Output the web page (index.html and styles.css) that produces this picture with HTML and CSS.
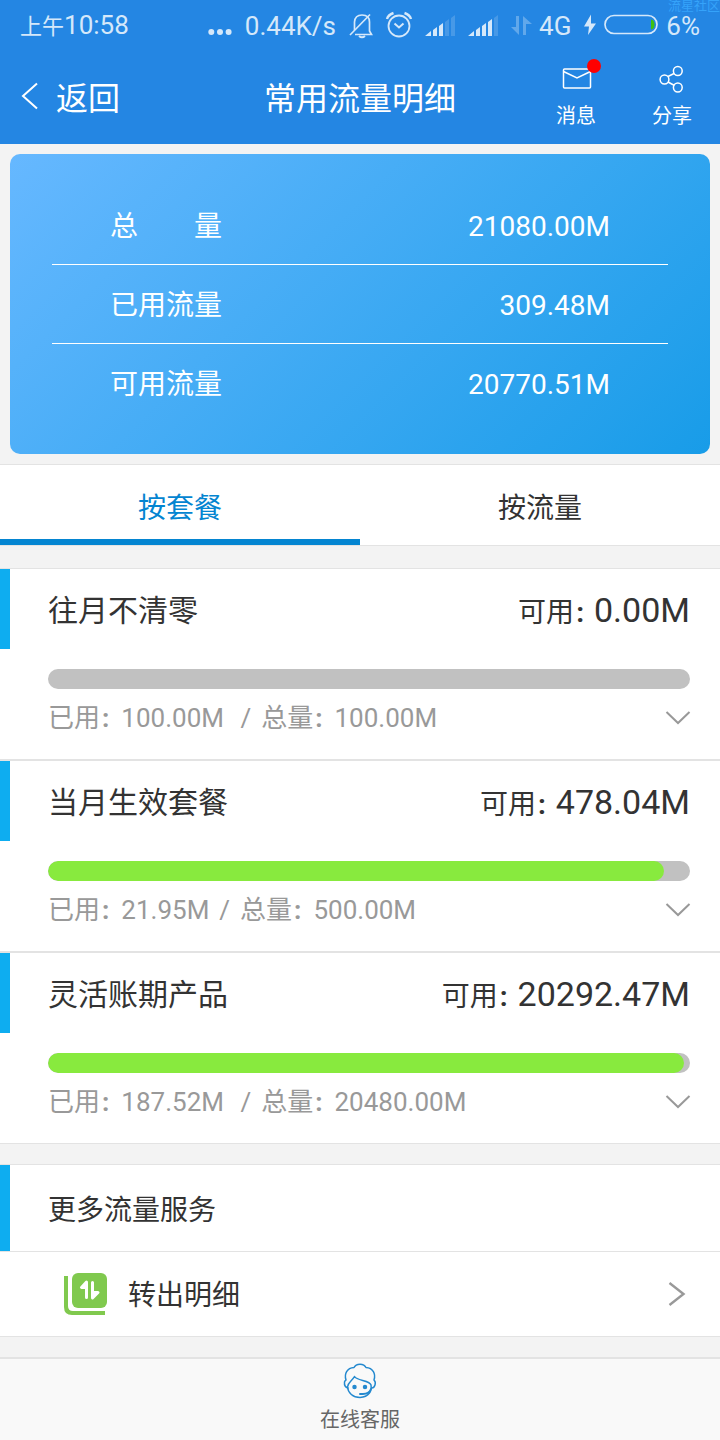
FILE: index.html
```html
<!DOCTYPE html>
<html lang="zh-CN">
<head>
<meta charset="utf-8">
<meta name="viewport" content="width=device-width, initial-scale=1">
<title>常用流量明细</title>
<link rel="stylesheet" href="styles.css">
</head>
<body>
<header class="top">
  <span class="watermark">流星社区</span>
  <div class="status">
    <span class="status-time"><span class="status-cjk">上午</span>10:58</span>
    <div class="status-right">
      <svg width="24" height="26" viewBox="0 0 24 26" fill="currentColor"><circle cx="3.3" cy="19" r="3"/><circle cx="12" cy="19" r="3"/><circle cx="20.6" cy="19" r="3"/></svg>
      <span>0.44K/s</span>
      <svg width="24" height="26" viewBox="0 0 24 26" fill="none" stroke="currentColor" stroke-width="1.7"><path d="M5.500 17V9Q6 2 13 2Q20.500 2 20.500 9V18L22.500 21.500H6"/><path d="M1 22L21 1.500"/><path d="M10 23Q13 25.500 16 23" stroke-width="2"/></svg>
      <svg width="26" height="26" viewBox="0 0 26 26" fill="none" stroke="currentColor" stroke-width="1.8"><circle cx="13" cy="13" r="10.500"/><path d="M8.500 10.500L13 14.500L17.500 10.500" stroke-width="2"/><path d="M1 6Q2 2 7.500 0M25 6Q24 2 18.500 0" stroke-width="2.400"/></svg>
      <svg width="30" height="26" viewBox="0 0 30 26" fill="currentColor"><path d="M0 23L6 18V23ZM8 17L12 14V23H8ZM14 13L18 10V23H14Z"/><path opacity=".2" d="M20 9L24 6V23H20ZM26 5L30 2V23H26Z"/></svg>
      <svg width="30" height="26" viewBox="0 0 30 26" fill="currentColor"><path d="M0 23L6 18V23ZM8 17L12 14V23H8ZM14 13L18 10V23H14ZM20 9L24 6V23H20Z"/><path opacity=".2" d="M26 5L30 2V23H26Z"/></svg>
      <div class="network">
        <svg width="22" height="26" viewBox="0 0 22 26" fill="currentColor" opacity=".35"><path d="M5 3H8V22L0 14H5ZM12 3L21 11H15V22H12Z"/></svg>
        <span>4G</span>
      </div>
      <div class="battery">
        <svg width="12" height="26" viewBox="0 0 12 26" fill="currentColor"><path d="M7 1.500L0 13.500H5L4 22L12 10.500H7Z"/></svg>
        <svg width="54" height="26" viewBox="0 0 54 26" fill="none"><path d="M47 6.500Q50.500 7 50.500 11.500Q50.500 16 47 16.500Z" fill="#3fc10f"/><rect x="1" y="2.500" width="52" height="18" rx="9" stroke="currentColor" stroke-width="1.700"/></svg>
        <span>6%</span>
      </div>
    </div>
  </div>
  <div class="nav">
    <a class="back" href="#">
      <svg width="18" height="28" viewBox="0 0 18 28" fill="none" stroke="currentColor" stroke-width="2"><path d="M17 1.500L3 14L17 26.500"/></svg>
      返回
    </a>
    <h1 class="title">常用流量明细</h1>
    <div class="actions">
      <a class="action" href="#">
        <svg width="40" height="40" viewBox="0 0 40 40" fill="none" stroke="currentColor" stroke-width="1.500"><rect x="7.500" y="12" width="27" height="19" rx="1"/><path d="M7.500 14.500L21 21L34.500 14.500"/><circle cx="38" cy="9" r="7" fill="red" stroke="none"/></svg>
        <span>消息</span>
      </a>
      <a class="action" href="#">
        <svg width="40" height="40" viewBox="0 0 40 40" fill="none" stroke="currentColor" stroke-width="1.500"><circle cx="12.500" cy="22.500" r="4.400"/><circle cx="25.800" cy="14" r="4.400"/><circle cx="25.800" cy="30.500" r="4.400"/><path d="M16 19.500L22 16.500M16 25L22.500 28.500"/></svg>
        <span>分享</span>
      </a>
    </div>
  </div>
</header>

<main>
  <dl class="summary">
    <div class="summary-row"><dt>总<span>量</span></dt><dd>21080.00M</dd></div>
    <div class="summary-row"><dt>已用流量</dt><dd>309.48M</dd></div>
    <div class="summary-row"><dt>可用流量</dt><dd>20770.51M</dd></div>
  </dl>

  <div class="tabs" role="tablist">
    <button class="tab tab-active" type="button" role="tab" aria-selected="true">按套餐</button>
    <button class="tab" type="button" role="tab" aria-selected="false">按流量</button>
  </div>

  <section class="plans">
    <article class="plan">
      <div class="plan-head"><h2>往月不清零</h2><p class="avail">可用<span class="colon">:</span><strong>0.00M</strong></p></div>
      <div class="plan-body">
        <div class="bar"></div>
        <div class="detail"><span>已用<span class="colon">:</span></span><span>100.00M&nbsp;</span><span>/</span><span>总量<span class="colon">:</span></span><span>100.00M</span>
          <button class="expand" type="button" aria-label="展开"><svg width="26" height="16" viewBox="0 0 26 16" fill="none" stroke="currentColor" stroke-width="2"><path d="M2.500 2L14 13L25.500 2"/></svg></button></div>
      </div>
    </article>
    <article class="plan">
      <div class="plan-head"><h2>当月生效套餐</h2><p class="avail">可用<span class="colon">:</span><strong>478.04M</strong></p></div>
      <div class="plan-body">
        <div class="bar"><div class="fill" style="width:96%"></div></div>
        <div class="detail"><span>已用<span class="colon">:</span></span><span>21.95M</span><span>/</span><span>总量<span class="colon">:</span></span><span>500.00M</span>
          <button class="expand" type="button" aria-label="展开"><svg width="26" height="16" viewBox="0 0 26 16" fill="none" stroke="currentColor" stroke-width="2"><path d="M2.500 2L14 13L25.500 2"/></svg></button></div>
      </div>
    </article>
    <article class="plan">
      <div class="plan-head"><h2>灵活账期产品</h2><p class="avail">可用<span class="colon">:</span><strong>20292.47M</strong></p></div>
      <div class="plan-body">
        <div class="bar"><div class="fill" style="width:99%"></div></div>
        <div class="detail"><span>已用<span class="colon">:</span></span><span>187.52M&nbsp;</span><span>/</span><span>总量<span class="colon">:</span></span><span>20480.00M</span>
          <button class="expand" type="button" aria-label="展开"><svg width="26" height="16" viewBox="0 0 26 16" fill="none" stroke="currentColor" stroke-width="2"><path d="M2.500 2L14 13L25.500 2"/></svg></button></div>
      </div>
    </article>
  </section>

  <section class="more">
    <h2 class="more-title">更多流量服务</h2>
    <a class="more-link" href="#">
      <svg width="44" height="44" viewBox="0 0 44 44"><rect x="8" y="1" width="35" height="35" rx="6" fill="#80c94e"/><path d="M0 4H4V34Q4 39 9 39H41V43H8Q0 43 0 35Z" fill="#80c94e"/><path d="M22.500 10.500V25.500M22.500 10L17.500 15.500H22.500M28.500 10.500V25.500M28.500 26L34 20.500H28.500" fill="#fff" stroke="#fff" stroke-width="3" stroke-linecap="round" stroke-linejoin="round"/></svg>
      <span class="more-label">转出明细</span>
      <svg class="chevron" width="18" height="26" viewBox="0 0 18 26" fill="none" stroke="currentColor" stroke-width="2.400"><path d="M1.500 2L15.500 13L1.500 24"/></svg>
    </a>
  </section>
</main>

<footer class="footer">
  <a class="service" href="#">
    <svg width="34" height="36" viewBox="0 0 34 36" fill="none" stroke="#2489cf" stroke-width="1.500" stroke-linejoin="round" stroke-linecap="round"><path d="M5 25Q1 24 1.500 19Q2 17.500 3 17C1 11 4 5 11 4.500C13 0 21 0 23 4.500C30 5 33 11 31 17Q33 19 32 22Q31 25 29 25"/><path d="M4.500 24C5 19 9 18 11.500 13.500C14 18 27 17 28 22C29 28 26 34 17 34.500C10 34.500 5 30 4.500 24Z"/><path d="M28 26Q26 31 20 31H17" stroke-width="2"/><circle cx="11.500" cy="24" r="1.500" fill="#2489cf"/><circle cx="22" cy="24" r="1.500" fill="#2489cf"/></svg>
    <span>在线客服</span>
  </a>
</footer>
</body>
</html>
```
FILE: styles.css
```css
* { box-sizing: border-box; }

body {
  margin: 0;
  min-height: 100vh;
  display: flex;
  flex-direction: column;
  background: #f3f3f3;
  color: #333;
  font-family: Roboto, "Noto Sans CJK SC", sans-serif;
  font-size: 28px;
}

h1, h2, p, dl, dd { margin: 0; font-weight: 400; }
a { color: inherit; text-decoration: none; }
button { border: 0; background: none; padding: 0; font: inherit; color: inherit; }
svg { display: block; flex: none; overflow: visible; }

/* Header */
.top { position: relative; background: #2486e3; color: #fff; }
.watermark {
  position: absolute;
  top: 0;
  right: 0;
  color: #35a3fa;
  font-size: 13px;
  line-height: 12px;
}
.status {
  display: flex;
  align-items: center;
  justify-content: space-between;
  height: 50px;
  padding: 2px 20px 0;
  color: #d5e8fa;
  font-size: 26px;
  line-height: 24px;
}
.status-cjk { font-size: 22px; }
.status-right { display: flex; align-items: center; gap: 13px; }
.network { display: flex; align-items: center; gap: 6px; }
.battery { display: flex; align-items: center; gap: 8px; }

.nav {
  display: grid;
  grid-template-columns: 1fr auto 1fr;
  align-items: center;
  height: 94px;
  padding: 0 20px 2px;
}
.back { display: flex; align-items: center; gap: 18px; font-size: 32px; }
.title { font-size: 32px; }
.actions { display: flex; justify-content: flex-end; gap: 56px; padding-right: 8px; }
.action {
  display: flex;
  flex-direction: column;
  align-items: center;
  font-size: 20px;
  line-height: 38px;
}

/* Summary card */
.summary {
  margin: 10px;
  padding: 32px 42px;
  border-radius: 10px;
  background: linear-gradient(135deg, #66b8ff, #189ce8);
  color: #fff;
}
.summary-row {
  display: flex;
  justify-content: space-between;
  padding: 4px 58px 0;
  line-height: 74px;
}
.summary-row + .summary-row { border-top: 1px solid #fff; }
.summary-row dt { display: flex; justify-content: space-between; width: 4em; }

/* Tabs */
.tabs {
  display: flex;
  border-top: 1px solid #e3e3e3;
  border-bottom: 1px solid #e3e3e3;
  background: #fff;
}
.tab {
  flex: 1;
  height: 80px;
  padding-top: 8px;
  border-bottom: 6px solid transparent;
}
.tab-active { color: #0485d1; border-bottom-color: #0485d1; }

/* Plans */
.plans {
  margin-top: 22px;
  border-top: 1px solid #e3e3e3;
  border-bottom: 1px solid #e3e3e3;
  background: #fff;
}
.plan + .plan { border-top: 2px solid #e3e3e3; }
.plan-head {
  display: flex;
  align-items: center;
  justify-content: space-between;
  height: 80px;
  padding: 4px 30px 0 38px;
  border-left: 10px solid #0eadf0;
  line-height: 40px;
}
.plan-head h2 { font-size: 30px; }
.colon { margin: 0 2px; font-weight: 700; }
.avail strong { margin-left: 8px; font-size: 34px; font-weight: 400; }
.plan-body { padding: 20px 30px 20px 48px; }
.bar { height: 20px; border-radius: 10px; background: #c1c1c1; overflow: hidden; }
.fill { height: 100%; border-radius: 10px; background: #88ea3e; }
.detail {
  display: flex;
  align-items: center;
  gap: 10px;
  height: 50px;
  padding-top: 8px;
  color: #999;
  font-size: 26px;
  line-height: 42px;
}
.expand { margin-left: auto; }

/* More services */
.more {
  margin: 20px 0;
  border-top: 1px solid #e3e3e3;
  border-bottom: 1px solid #e3e3e3;
  background: #fff;
}
.more-title {
  padding: 6px 0 0 38px;
  border-left: 10px solid #0eadf0;
  font-size: 28px;
  line-height: 80px;
}
.more-link {
  display: flex;
  align-items: center;
  gap: 20px;
  padding: 0 34px 0 64px;
  border-top: 1px solid #e3e3e3;
}
.more-label { padding-top: 4px; line-height: 80px; }
.chevron { margin-left: auto; color: #999; }

/* Footer */
.footer {
  position: sticky;
  bottom: 0;
  margin-top: auto;
  border-top: 2px solid #e3e3e3;
  background: #f9f9f9;
}
.service {
  display: flex;
  flex-direction: column;
  align-items: center;
  padding-top: 4px;
  color: #666;
  font-size: 20px;
  line-height: 42px;
}
```
